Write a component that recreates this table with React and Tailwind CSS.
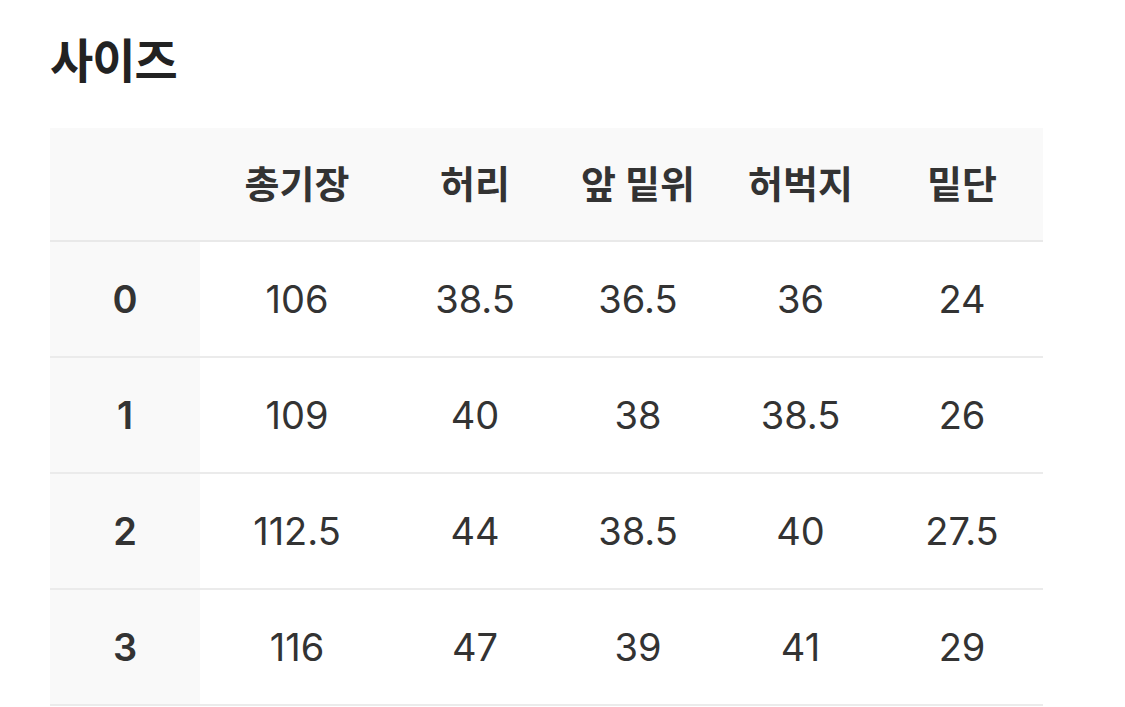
import React from 'react';

const headers = ['총기장', '허리', '앞 밑위', '허벅지', '밑단'];

const rows = [
  ['0', '106', '38.5', '36.5', '36', '24'],
  ['1', '109', '40', '38', '38.5', '26'],
  ['2', '112.5', '44', '38.5', '40', '27.5'],
  ['3', '116', '47', '39', '41', '29'],
];

const App = () => {
  return (
    <div
      className="min-h-screen bg-white px-[50px] pt-[30px] text-[#333333]"
      style={{ fontFamily: 'Inter, "Noto Sans CJK KR", "Noto Sans", sans-serif' }}
    >
      <h1 className="h-[62px] text-[47px] font-bold leading-[62px] tracking-[-1px] text-[#222222]">사이즈</h1>

      <table className="mt-[36px] w-[993px] table-fixed border-collapse">
        <colgroup>
          <col className="w-[150px]" />
          <col className="w-[194px]" />
          <col className="w-[162px]" />
          <col className="w-[164px]" />
          <col className="w-[161px]" />
          <col className="w-[162px]" />
        </colgroup>
        <thead>
          <tr className="h-[113px] border-b-2 border-[#e9e9e9] bg-[#f9f9f9]">
            <th></th>
            {headers.map((h) => (
              <th key={h} className="text-center text-[38px] font-bold text-[#333333]">
                {h}
              </th>
            ))}
          </tr>
        </thead>
        <tbody>
          {rows.map((row) => (
            <tr key={row[0]} className="h-[116px] border-b-2 border-[#ebebeb]">
              {row.map((cell, i) =>
                i === 0 ? (
                  <td key={i} className="bg-[#f9f9f9] text-center text-[38px] font-semibold text-[#333333]">
                    {cell}
                  </td>
                ) : (
                  <td key={i} className="text-center text-[38px] font-normal text-[#333333]">
                    {cell}
                  </td>
                )
              )}
            </tr>
          ))}
        </tbody>
      </table>
    </div>
  );
};

export default App;
